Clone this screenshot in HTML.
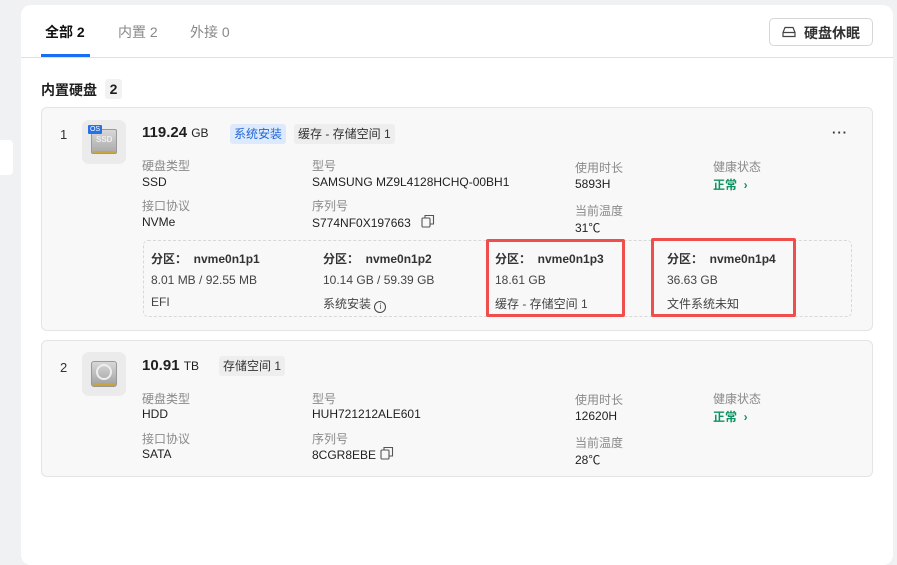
<!DOCTYPE html>
<html><head><meta charset="utf-8"><style>
*{margin:0;padding:0;box-sizing:border-box}
body{width:897px;height:554px;background:#f0f1f3;font-family:"Liberation Sans","Noto Sans CJK SC",sans-serif;position:relative;overflow:hidden;color:#1f1f1f}
.a{position:absolute;white-space:nowrap}
.panel{position:absolute;left:21px;top:5px;width:872px;height:560px;background:#fff;border-radius:10px}
.card{position:absolute;left:41px;width:832px;background:#f8f8f8;border:1px solid #e4e4e4;border-radius:6px}
.lbl{font-size:12px;color:#8a8a8a}
.val{font-size:12px;color:#1f1f1f}
.tag{position:absolute;height:20px;line-height:20px;padding:0 4px;font-size:12px;border-radius:3px}
.icon{position:absolute;width:44px;height:44px;background:#ebebeb;border-radius:7px}
.pt{font-size:12px;font-weight:bold;color:#333}
.pv{font-size:12px;color:#444}
.red{position:absolute;border:3px solid #f04d4d;border-radius:2px}
</style></head><body>
<div class="a" style="left:0;top:140px;width:13px;height:35px;background:#fff;border-radius:0 4px 4px 0"></div>
<div class="panel"></div>
<div class="a" style="left:45px;top:22px;font-size:14px;font-weight:bold;color:#111">全部 2</div>
<div class="a" style="left:41px;top:54px;width:49px;height:3px;background:#1a6ef5"></div>
<div class="a" style="left:118px;top:22px;font-size:14px;color:#888">内置 2</div>
<div class="a" style="left:190px;top:22px;font-size:14px;color:#888">外接 0</div>
<div class="a" style="left:21px;top:57px;width:872px;height:1px;background:#e0e0e0"></div>
<div class="a" style="left:769px;top:18px;width:104px;height:28px;border:1px solid #d6d6d6;border-radius:5px;background:#fff"></div>
<svg class="a" style="left:782px;top:26px" width="14" height="12" viewBox="0 0 14 12"><path d="M3 1.5h8l2 5v4H1v-4z M1 6.5h12" fill="none" stroke="#444" stroke-width="1.2"/></svg>
<div class="a" style="left:804px;top:23px;font-size:14px;font-weight:bold;color:#333">硬盘休眠</div>
<div class="a" style="left:41px;top:80px;font-size:14px;font-weight:bold">内置硬盘</div>
<div class="a" style="left:105px;top:79px;width:17px;height:20px;background:#f2f2f2;border-radius:3px;font-size:14px;font-weight:bold;text-align:center;line-height:20px">2</div>

<div class="card" style="top:107px;height:224px"></div>
<div class="a" style="left:60px;top:127px;font-size:13px;color:#333">1</div>
<div class="icon" style="left:82px;top:120px"></div>
<div class="a" style="left:91px;top:129px;width:26px;height:25px;background:linear-gradient(#d8d8d8,#a9a9a9);border-radius:2px;border:1px solid #999"></div>
<div class="a" style="left:96px;top:135px;font-size:8px;color:#eee;font-weight:bold">SSD</div>
<div class="a" style="left:93px;top:151px;width:22px;height:2px;background:#c9a53a"></div>
<div class="a" style="left:88px;top:125px;width:14px;height:9px;background:#2670e8;color:#fff;font-size:7px;line-height:9px;text-align:center;border-radius:1px">OS</div>
<div class="a" style="left:142px;top:124px;font-size:15px;font-weight:bold">119.24 <span style="font-size:12px;font-weight:normal">GB</span></div>
<div class="tag" style="left:230px;top:124px;background:#ddeafd;color:#2266d8">系统安装</div>
<div class="tag" style="left:294px;top:124px;background:#eeeeee;color:#333">缓存 - 存储空间 1</div>
<div class="a" style="left:832px;top:125px;font-size:13px;font-weight:bold;color:#333;letter-spacing:1px">···</div>
<div class="a lbl" style="left:142px;top:157px">硬盘类型</div><div class="a val" style="left:142px;top:175px">SSD</div>
<div class="a lbl" style="left:142px;top:197px">接口协议</div><div class="a val" style="left:142px;top:215px">NVMe</div>
<div class="a lbl" style="left:312px;top:157px">型号</div><div class="a val" style="left:312px;top:175px">SAMSUNG MZ9L4128HCHQ-00BH1</div>
<div class="a lbl" style="left:312px;top:197px">序列号</div><div class="a val" style="left:312px;top:216px">S774NF0X197663</div>
<svg class="a" style="left:421px;top:214px" width="14" height="14" viewBox="0 0 14 14"><rect x="1" y="4" width="8" height="9" rx="1" fill="none" stroke="#555" stroke-width="1.1"/><path d="M4 4V1.5h8.5V10H9" fill="none" stroke="#555" stroke-width="1.1"/></svg>
<div class="a lbl" style="left:575px;top:159px">使用时长</div><div class="a val" style="left:575px;top:177px">5893H</div>
<div class="a lbl" style="left:575px;top:202px">当前温度</div><div class="a val" style="left:575px;top:219px">31℃</div>
<div class="a lbl" style="left:713px;top:158px">健康状态</div>
<div class="a" style="left:713px;top:176px;font-size:12px;font-weight:bold;color:#0e9461">正常 &nbsp;›</div>

<div class="a" style="left:143px;top:240px;width:709px;height:77px;border:1px dashed #d8d8d8;border-radius:5px"></div>
<div class="a pt" style="left:151px;top:250px">分区：&nbsp; nvme0n1p1</div>
<div class="a pv" style="left:151px;top:273px">8.01 MB / 92.55 MB</div>
<div class="a pv" style="left:151px;top:295px">EFI</div>
<div class="a pt" style="left:323px;top:250px">分区：&nbsp; nvme0n1p2</div>
<div class="a pv" style="left:323px;top:273px">10.14 GB / 59.39 GB</div>
<div class="a pv" style="left:323px;top:295px">系统安装 <span style="display:inline-block;width:12px;height:12px;border:1px solid #444;border-radius:50%;font-size:8px;text-align:center;line-height:10px;vertical-align:-1px">i</span></div>
<div class="a pt" style="left:495px;top:250px">分区：&nbsp; nvme0n1p3</div>
<div class="a pv" style="left:495px;top:273px">18.61 GB</div>
<div class="a pv" style="left:495px;top:295px">缓存 - 存储空间 1</div>
<div class="a pt" style="left:667px;top:250px">分区：&nbsp; nvme0n1p4</div>
<div class="a pv" style="left:667px;top:273px">36.63 GB</div>
<div class="a pv" style="left:667px;top:295px">文件系统未知</div>
<div class="red" style="left:486px;top:239px;width:139px;height:78px"></div>
<div class="red" style="left:651px;top:238px;width:145px;height:79px"></div>

<div class="card" style="top:340px;height:137px"></div>
<div class="a" style="left:60px;top:360px;font-size:13px;color:#333">2</div>
<div class="icon" style="left:82px;top:352px"></div>
<div class="a" style="left:91px;top:361px;width:26px;height:26px;background:linear-gradient(#d8d8d8,#a0a0a0);border-radius:3px;border:1px solid #999"></div>
<div class="a" style="left:96px;top:364px;width:16px;height:16px;border:2px solid #eee;border-radius:50%"></div>
<div class="a" style="left:93px;top:383px;width:22px;height:2px;background:#c9a53a"></div>
<div class="a" style="left:142px;top:357px;font-size:15px;font-weight:bold">10.91 <span style="font-size:12px;font-weight:normal">TB</span></div>
<div class="tag" style="left:219px;top:356px;background:#eeeeee;color:#333">存储空间 1</div>
<div class="a lbl" style="left:142px;top:390px">硬盘类型</div><div class="a val" style="left:142px;top:407px">HDD</div>
<div class="a lbl" style="left:142px;top:430px">接口协议</div><div class="a val" style="left:142px;top:447px">SATA</div>
<div class="a lbl" style="left:312px;top:390px">型号</div><div class="a val" style="left:312px;top:407px">HUH721212ALE601</div>
<div class="a lbl" style="left:312px;top:430px">序列号</div><div class="a val" style="left:312px;top:448px">8CGR8EBE</div>
<svg class="a" style="left:380px;top:446px" width="14" height="14" viewBox="0 0 14 14"><rect x="1" y="4" width="8" height="9" rx="1" fill="none" stroke="#555" stroke-width="1.1"/><path d="M4 4V1.5h8.5V10H9" fill="none" stroke="#555" stroke-width="1.1"/></svg>
<div class="a lbl" style="left:575px;top:391px">使用时长</div><div class="a val" style="left:575px;top:409px">12620H</div>
<div class="a lbl" style="left:575px;top:434px">当前温度</div><div class="a val" style="left:575px;top:451px">28℃</div>
<div class="a lbl" style="left:713px;top:390px">健康状态</div>
<div class="a" style="left:713px;top:408px;font-size:12px;font-weight:bold;color:#0e9461">正常 &nbsp;›</div>
</body></html>
